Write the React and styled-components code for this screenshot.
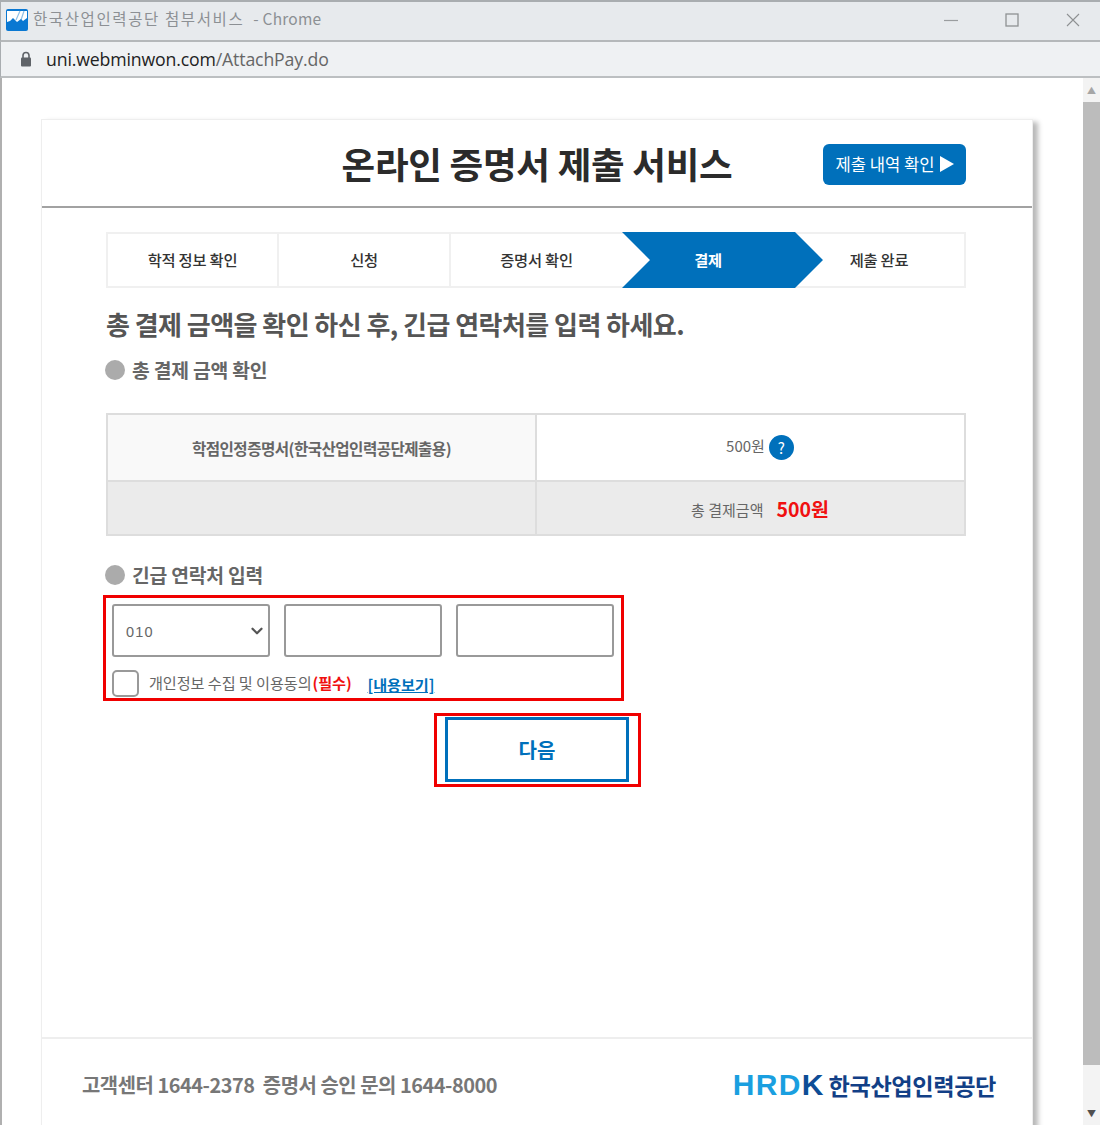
import React from 'react';
import styled, { createGlobalStyle } from 'styled-components';
import { ChevronDown } from 'lucide-react';

const KR = `"Noto Sans CJK KR", "Noto Sans", sans-serif`;
const BLUE = '#0070bb';

const steps = ['학적 정보 확인', '신청', '증명서 확인', '결제', '제출 완료'];

const Global = createGlobalStyle`
  html, body { margin: 0; height: 100%; background: #fff; overflow: hidden; }
  * { box-sizing: border-box; }
`;

/* Browser window chrome */
const Win = styled.div`
  width: 1100px;
  height: 1125px;
  display: flex;
  flex-direction: column;
  overflow: hidden;
  font-family: ${KR};
`;

const TitleBar = styled.div`
  height: 42px;
  flex: none;
  display: flex;
  align-items: center;
  padding: 0 0 3px 5px;
  background: #e7eaed;
  border-top: 2px solid #a9adb0;
  border-bottom: 2px solid #b5b8ba;
  border-left: 1px solid #a9adb0;
`;

const TitleText = styled.span`
  margin: 0 0 3px 5px;
  font-size: 15.5px;
  letter-spacing: 1.6px;
  color: #8c9094;
  white-space: nowrap;
  em { margin-left: 4px; font-style: normal; font-size: 15.5px; letter-spacing: 0.2px; }
`;

const WinButtons = styled.div`
  margin-left: auto;
  display: flex;
  align-items: center;
  gap: 47px;
  padding-right: 20px;
`;

const AddressBar = styled.div`
  height: 36px;
  flex: none;
  display: flex;
  align-items: center;
  padding: 0 0 1px 19px;
  background: #eff1f3;
  border-bottom: 2px solid #bcbfc1;
  border-left: 1px solid #a9adb0;
`;

const Url = styled.span`
  margin-left: 14px;
  font-family: "Open Sans", sans-serif;
  font-size: 17.7px;
  letter-spacing: -0.15px;
  color: #222;
  em { font-style: normal; color: #666; }
`;

const Viewport = styled.div`
  flex: 1;
  min-height: 0;
  display: flex;
  border-left: 2px solid #b0b0b0;
`;

const Page = styled.div`
  flex: 1;
  min-width: 0;
  padding: 41px 0 0 39px;
`;

const ScrollBar = styled.div`
  width: 17px;
  flex: none;
  display: flex;
  flex-direction: column;
  background: #f3f3f3;
`;

const ScrollArrow = styled.div`
  height: 24px;
  flex: none;
  margin-top: ${p => (p.$up ? '0' : 'auto')};
  display: flex;
  align-items: center;
  justify-content: center;
  color: ${p => (p.$up ? '#a6a6a6' : '#505050')};
  font-size: 9px;
  line-height: 1;
`;

const ScrollThumb = styled.div`
  height: 963px;
  flex: none;
  background: #bcbcbc;
`;

/* Service card */
const Card = styled.div`
  width: 992px;
  height: 1010px;
  display: flex;
  flex-direction: column;
  background: #fff;
  border: 1px solid #eeeeee;
  box-shadow: 5px 3px 5px rgba(0, 0, 0, 0.28);
`;

const Header = styled.header`
  height: 88px;
  flex: none;
  position: relative;
  display: flex;
  align-items: center;
  justify-content: center;
  border-bottom: 2px solid #a2a2a2;
`;

const Title = styled.h1`
  margin: 0;
  font-size: 36.6px;
  font-weight: 700;
  letter-spacing: -0.3px;
  color: #2b2b2b;
`;

const HistoryButton = styled.button`
  position: absolute;
  right: 66px;
  top: 24px;
  width: 143px;
  height: 41px;
  display: flex;
  align-items: center;
  justify-content: center;
  gap: 5px;
  padding: 0 0 2px;
  border: 0;
  border-radius: 6px;
  background: ${BLUE};
  color: #fff;
  font-family: ${KR};
  font-size: 16.6px;
  svg { flex: none; }
`;

const Body = styled.main`
  flex: 1;
  display: flex;
  flex-direction: column;
  padding: 24px 66px 0 64px;
`;

const Steps = styled.ol`
  list-style: none;
  margin: 0;
  padding: 0;
  height: 56px;
  flex: none;
  display: grid;
  grid-template-columns: 171px 172px 171px 172px 170px;
  border: 2px solid #f0f0f0;
`;

const Step = styled.li`
  display: flex;
  align-items: center;
  justify-content: center;
  margin: -2px 0;
  padding-bottom: 2px;
  font-size: 15.3px;
  font-weight: ${p => (p.$active ? 700 : 500)};
  letter-spacing: -0.2px;
  color: ${p => (p.$active ? '#fff' : '#333')};
  border-right: ${p => (p.$plain ? '2px solid #f0f0f0' : '0')};
  ${p => p.$active && `
    position: relative;
    z-index: 1;
    margin-right: -29px;
    padding-right: 29px;
    background: ${BLUE};
    clip-path: polygon(0 0, calc(100% - 28px) 0, 100% 50%, calc(100% - 28px) 100%, 0 100%, 28px 50%);
  `}
`;

const Lead = styled.h2`
  margin: 16px 0 0;
  height: 40px;
  line-height: 40px;
  font-size: 26px;
  font-weight: 700;
  letter-spacing: -0.55px;
  color: #555;
`;

const SectionTitle = styled.h3`
  margin: ${p => p.$top}px 0 0 -1px;
  height: 30px;
  display: flex;
  align-items: center;
  gap: 7px;
  font-size: 19.3px;
  font-weight: 700;
  letter-spacing: -0.2px;
  color: #666;
  &::before {
    content: '';
    width: 20px;
    height: 20px;
    border-radius: 50%;
    background: #ababab;
  }
`;

const PriceTable = styled.table`
  width: 860px;
  height: 123px;
  margin-top: 28px;
  flex: none;
  table-layout: fixed;
  border-collapse: collapse;
  border: 2px solid #dddddd;
  font-size: 15px;
  color: #666;
  td {
    border: 2px solid #dddddd;
    text-align: center;
    padding: 0;
    width: 50%;
  }
`;

const NameCell = styled.td`
  height: 67px;
  background: #f9f9f9;
  && { font-size: 15.6px; }
  font-weight: 700;
  letter-spacing: -0.55px;
`;

const PriceCell = styled.td`
  && { padding-left: 19px; }
`;

const TotalRow = styled.tr`
  background: #ebebeb;
`;

const HelpBadge = styled.span`
  display: inline-flex;
  align-items: center;
  justify-content: center;
  width: 25px;
  height: 25px;
  margin-left: 4px;
  border-radius: 50%;
  background: ${BLUE};
  color: #fff;
  font-size: 15px;
  vertical-align: middle;
`;

const Amount = styled.span`
  margin-left: 13px;
  font-size: 19.5px;
  font-weight: 700;
  color: #f01010;
  vertical-align: -1px;
`;

const ContactBox = styled.div`
  width: 521px;
  height: 106px;
  margin: 5px 0 0 -3px;
  flex: none;
  padding: 6px 0 0 6px;
  border: 3px solid #f00000;
`;

const PhoneRow = styled.div`
  display: flex;
  gap: 14px;
`;

const SelectWrap = styled.div`
  position: relative;
  width: 158px;
  height: 53px;
  svg {
    position: absolute;
    right: 4px;
    top: 18px;
    color: #555;
    pointer-events: none;
  }
`;

const PhoneSelect = styled.select`
  width: 100%;
  height: 100%;
  padding: 3px 0 0 12px;
  appearance: none;
  background: #fff;
  border: 2px solid #999;
  border-radius: 3px;
  font-family: "Liberation Sans", sans-serif;
  font-size: 14.5px;
  letter-spacing: 1.2px;
  color: #666;
`;

const PhoneInput = styled.input`
  width: 158px;
  height: 53px;
  background: #fff;
  border: 2px solid #999;
  border-radius: 3px;
`;

const AgreeRow = styled.div`
  margin-top: 13px;
  display: flex;
  align-items: center;
  font-size: 15.2px;
  letter-spacing: -0.1px;
  color: #666;
`;

const CheckBox = styled.input.attrs({ type: 'checkbox' })`
  appearance: none;
  width: 27px;
  height: 27px;
  margin: 0 10px 0 0;
  background: #fff;
  border: 2px solid #999;
  border-radius: 5px;
`;

const AgreeText = styled.span`
  padding-bottom: 3px;
`;

const Required = styled.span`
  margin-left: 1px;
  font-weight: 700;
  color: #f01010;
`;

const ViewLink = styled.a`
  margin-left: 16px;
  font-weight: 700;
  color: ${BLUE};
  text-decoration: underline;
`;

const NextBox = styled.div`
  width: 207px;
  height: 74px;
  margin: 12px 0 0 328px;
  flex: none;
  padding: 1px 0 0 8px;
  border: 3px solid #f00000;
`;

const NextButton = styled.button`
  width: 184px;
  height: 65px;
  background: #fff;
  border: 3px solid ${BLUE};
  color: ${BLUE};
  font-family: ${KR};
  font-size: 20px;
  font-weight: 700;
`;

const Footer = styled.footer`
  height: 91px;
  flex: none;
  display: flex;
  align-items: center;
  justify-content: space-between;
  padding: 2px 36px 0 40px;
  border-top: 2px solid #eeeeee;
`;

const Contact = styled.p`
  margin: 0;
  font-size: 19.9px;
  font-weight: 700;
  letter-spacing: -0.45px;
  color: #777;
  white-space: pre;
`;

const Logo = styled.div`
  display: flex;
  align-items: center;
  gap: 5px;
  font-weight: 700;
  white-space: nowrap;
`;

const LogoMark = styled.span`
  font-family: "Liberation Sans", sans-serif;
  font-size: 30px;
  letter-spacing: 1.4px;
  color: #1a9fe0;
  b { color: #0d4d96; letter-spacing: 0; }
`;

const LogoName = styled.span`
  font-size: 23.2px;
  letter-spacing: -0.4px;
  color: #123f86;
`;

function Favicon() {
  return (
    <svg width="22" height="22" viewBox="0 0 22 22">
      <rect width="22" height="22" rx="2" fill="#0a78d2" />
      <path d="M1 2h20v9l-2 1-2 3-3-3-4 3-4-4-3 3-2 1z" fill="#fff" />
      <path d="M14 2l-4 9M18 2l-3 9" stroke="#8fbfe4" strokeWidth="1.2" />
      <path d="M1 13l3-1 3-3 4 4 4-3 2 2 4-3v12H1z" fill="#0a78d2" />
    </svg>
  );
}

function Lock() {
  return (
    <svg width="12" height="16" viewBox="0 0 12 16">
      <path d="M3 7V4.5a3 3 0 0 1 6 0V7" fill="none" stroke="#5f6368" strokeWidth="1.6" />
      <rect x="1" y="6.5" width="10" height="9" rx="1" fill="#5f6368" />
    </svg>
  );
}

function WindowIcons() {
  return (
    <WinButtons>
      <svg width="14" height="14" viewBox="0 0 14 14">
        <path d="M0 7.5h14" stroke="#9a9d9f" strokeWidth="1.2" />
      </svg>
      <svg width="14" height="14" viewBox="0 0 14 14">
        <rect x="1" y="1" width="12" height="12" fill="none" stroke="#8e9193" strokeWidth="1.3" />
      </svg>
      <svg width="14" height="14" viewBox="0 0 14 14">
        <path d="M1 1l12 12M13 1L1 13" stroke="#8e9193" strokeWidth="1.1" />
      </svg>
    </WinButtons>
  );
}

export default function App() {
  return (
    <Win>
      <Global />
      <TitleBar>
        <Favicon />
        <TitleText>한국산업인력공단 첨부서비스 <em>- Chrome</em></TitleText>
        <WindowIcons />
      </TitleBar>
      <AddressBar>
        <Lock />
        <Url>uni.webminwon.com<em>/AttachPay.do</em></Url>
      </AddressBar>
      <Viewport>
        <Page>
          <Card>
            <Header>
              <Title>온라인 증명서 제출 서비스</Title>
              <HistoryButton>
                제출 내역 확인
                <svg width="14" height="16" viewBox="0 0 14 16">
                  <path d="M0 0l14 8-14 8z" fill="#fff" />
                </svg>
              </HistoryButton>
            </Header>
            <Body>
              <Steps>
                {steps.map((s, i) => (
                  <Step key={s} $active={i === 3} $plain={i < 2}>{s}</Step>
                ))}
              </Steps>
              <Lead>총 결제 금액을 확인 하신 후, 긴급 연락처를 입력 하세요.</Lead>
              <SectionTitle $top={11}>총 결제 금액 확인</SectionTitle>
              <PriceTable>
                <tbody>
                  <tr>
                    <NameCell>학점인정증명서(한국산업인력공단제출용)</NameCell>
                    <PriceCell>500원<HelpBadge>?</HelpBadge></PriceCell>
                  </tr>
                  <TotalRow>
                    <td />
                    <PriceCell>총 결제금액<Amount>500원</Amount></PriceCell>
                  </TotalRow>
                </tbody>
              </PriceTable>
              <SectionTitle $top={24}>긴급 연락처 입력</SectionTitle>
              <ContactBox>
                <PhoneRow>
                  <SelectWrap>
                    <PhoneSelect defaultValue="010">
                      <option>010</option>
                    </PhoneSelect>
                    <ChevronDown size={18} strokeWidth={3} />
                  </SelectWrap>
                  <PhoneInput />
                  <PhoneInput />
                </PhoneRow>
                <AgreeRow>
                  <CheckBox />
                  <AgreeText>개인정보 수집 및 이용동의<Required>(필수)</Required></AgreeText>
                  <ViewLink href="#">[내용보기]</ViewLink>
                </AgreeRow>
              </ContactBox>
              <NextBox>
                <NextButton>다음</NextButton>
              </NextBox>
            </Body>
            <Footer>
              <Contact>고객센터 1644-2378  증명서 승인 문의 1644-8000</Contact>
              <Logo>
                <LogoMark>HRD<b>K</b></LogoMark>
                <LogoName>한국산업인력공단</LogoName>
              </Logo>
            </Footer>
          </Card>
        </Page>
        <ScrollBar>
          <ScrollArrow $up>▲</ScrollArrow>
          <ScrollThumb />
          <ScrollArrow>▼</ScrollArrow>
        </ScrollBar>
      </Viewport>
    </Win>
  );
}
